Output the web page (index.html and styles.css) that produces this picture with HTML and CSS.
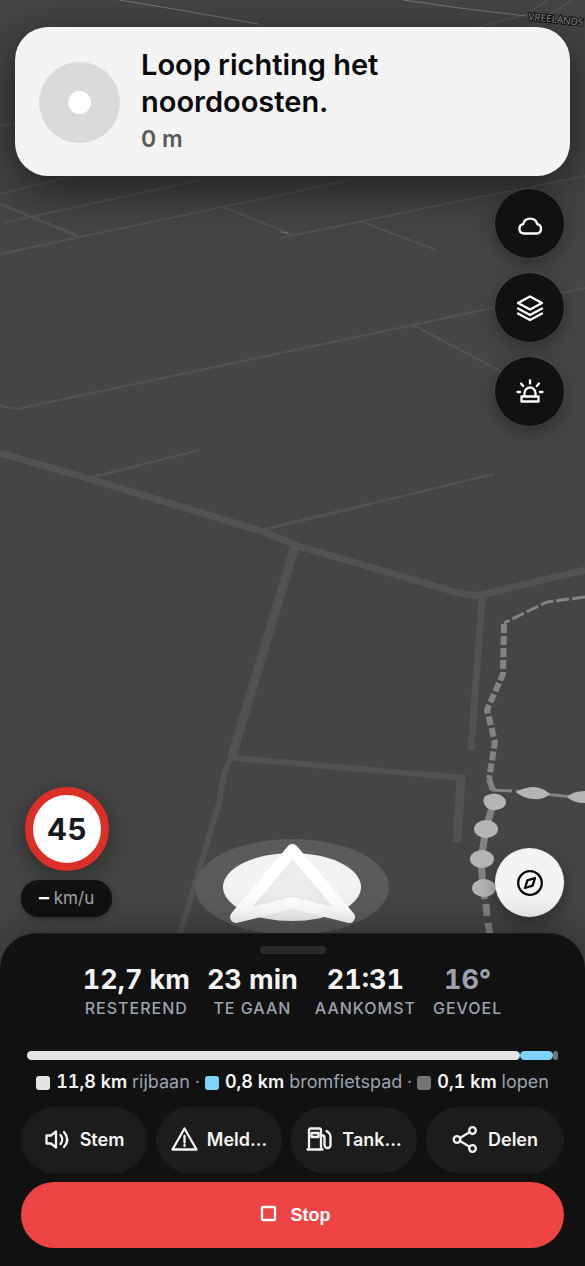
FILE: index.html
```html
<!DOCTYPE html>
<html lang="nl">
<head>
<meta charset="utf-8">
<meta name="viewport" content="width=device-width, initial-scale=1">
<title>Navigatie</title>
<link rel="stylesheet" href="styles.css">
</head>
<body>
<div class="app">
  <svg class="map" viewBox="0 0 585 1266" preserveAspectRatio="xMidYMin slice" aria-hidden="true">
    <g class="thin">
      <path d="M0 194L57 180L150 158M3 223L200 180M0 254L80 237L223 207L350 180M223 207L293 235M280 238L480 197L585 176M360 221L436 250"/>
      <path d="M0 126L15 124M478 27L525 15L548 0M550 14L572 0"/>
    </g>
    <path class="road w3" d="M0 204L80 237"/>
    <path class="road w2" d="M0 406L17 409L413 325L585 288M413 325L510 376M89 478L199 450M262 530L494 474"/>
    <path class="road w3" d="M89 478L140 465M262 530L370 504"/>
    <path class="road w7" d="M0 453L90 479L261 531L298 546L455 592Q468 596 481 595L585 570"/>
    <path class="road w9" d="M295 546L232 756"/>
    <path class="road w6" d="M233 750L229 762Q221 780 220 800L180 934"/>
    <path class="road w7" d="M482 598L471 750"/>
    <path class="road w6" d="M233 758L465 778"/>
    <path class="road w9" d="M461 778L457 842"/>
    <path class="hair" d="M119 0L180 10L258 24M403 0L460 8L526 16M281 232L288 233"/>
    <path class="foot f3" d="M585 597L547 602L504 623"/>
    <path class="foot f6" d="M504 624L503 674L487 710L495 742L489 779"/>
    <path class="foot-solid f6" d="M489 779L493 790"/>
    <path class="foot-solid f3" d="M492 790L512 791M516 791L563 796L585 797"/>
    <path class="foot-solid f7" d="M494 800L486 829L481 859L483 888L485 899"/>
    <path class="foot-solid f7" d="M486 904L487 916M488 923L490 935"/>
    <g class="dots">
      <path d="M516 792Q525 787 534 787Q544 788 550 794Q544 800 534 799Q524 799 516 792Z"/>
      <path d="M567 797Q573 791 585 791V803Q573 803 567 797Z"/>
      <path d="M485 796Q495 791 502 796Q509 801 504 807Q496 813 487 808Q481 802 485 796Z"/>
      <ellipse cx="486" cy="829" rx="12" ry="9"/>
      <ellipse cx="482" cy="859" rx="12" ry="9"/>
      <ellipse cx="484" cy="888" rx="12" ry="9"/>
    </g>
    <text class="street" x="528" y="20" transform="rotate(6 528 20)">VREELANDS</text>
    <ellipse class="halo" cx="292" cy="887" rx="97" ry="48"/>
    <ellipse class="disc" cx="292" cy="887" rx="69" ry="34"/>
    <path class="arrow" d="M292.500 850L236 917L292.500 903L349 917Z"/>
  </svg>

  <header class="instruction">
    <span class="maneuver"><span class="maneuver-dot"></span></span>
    <div class="instruction-text">
      <h1>Loop richting het noordoosten.</h1>
      <p>0 m</p>
    </div>
  </header>

  <nav class="tools" aria-label="Kaart">
    <button class="round" aria-label="Weer"><svg class="ico" viewBox="0 0 27 27"><path d="M8 23.500a4.700 4.700 0 0 1-.8-9.300a7.200 7.200 0 0 1 14 0a4.700 4.700 0 0 1-.6 9.300Z"/></svg></button>
    <button class="round" aria-label="Lagen"><svg class="ico" viewBox="0 0 27 27"><path d="M14 2.500L26 9L14 15.500L2 9Z"/><path d="M2 14.500L14 21L26 14.500M2 19.500L14 26L26 19.500"/></svg></button>
    <button class="round" aria-label="Alarm"><svg class="ico" viewBox="0 0 27 27"><path d="M8.500 18.500v-3.500a5.500 5.500 0 0 1 11 0v3.500M5.500 18.500h17v5h-17ZM14 2.500v3M5 5.500l2.200 2.500M23 5.500l-2.200 2.500M1.500 14h2.500M24 14h2.500"/></svg></button>
  </nav>

  <div class="hud">
    <div class="speed">
      <div class="limit">45</div>
      <div class="current"><b>–</b> km/u</div>
    </div>
    <button class="round light" aria-label="Kompas"><svg class="ico" viewBox="0 0 27 27"><circle cx="14" cy="14" r="11.800"/><path d="M19 9L16.600 16.600L9 19L11.400 11.400Z"/></svg></button>
  </div>

  <section class="panel">
    <span class="handle"></span>
    <dl class="stats">
      <div><dd>12,7 km</dd><dt>RESTEREND</dt></div>
      <div><dd>23 min</dd><dt>TE GAAN</dt></div>
      <div><dd>21:31</dd><dt>AANKOMST</dt></div>
      <div class="muted"><dd>16°</dd><dt>GEVOEL</dt></div>
    </dl>
    <div class="bar">
      <span class="seg main-road"></span><span class="seg moped" style="width:6.200%"></span><span class="seg walk" style="width:1%"></span>
    </div>
    <p class="legend">
      <span><i class="key main-road"></i><b>11,8 km</b> rijbaan ·</span>
      <span><i class="key moped"></i><b>0,8 km</b> bromfietspad ·</span>
      <span><i class="key walk"></i><b>0,1 km</b> lopen</span>
    </p>
    <div class="actions">
      <button class="action"><svg class="ico" viewBox="0 0 27 27"><path d="M2.500 9.500h4.500l5-4v16l-5-4H2.500ZM16.500 9q3.500 4.500 0 9M20 6q6.500 7.500 0 15"/></svg><span>Stem</span></button>
      <button class="action"><svg class="ico" viewBox="0 0 27 27"><path d="M13.500 2.500L25.500 23.500H1.500Z"/><path d="M13.500 10v6.500M13.500 19v1"/></svg><span>Meld…</span></button>
      <button class="action"><svg class="ico" viewBox="0 0 27 27"><path d="M3 23.500V4a1.500 1.500 0 0 1 1.500-1.500h9a1.500 1.500 0 0 1 1.500 1.500v19.500M1.500 23.500h15M5.500 7h7v4h-7Z"/><path d="M15 9.500h1.500q2 0 2 2V19a3 3 0 0 0 6 0V10.500q0-2-1.500-3.500L20.500 5"/></svg><span>Tank…</span></button>
      <button class="action wide"><svg class="ico" viewBox="0 0 27 27"><circle cx="20.500" cy="4.500" r="3.300"/><circle cx="5" cy="13.500" r="3.300"/><circle cx="20.500" cy="22.500" r="3.300"/><path d="M8 12L17.500 6.200M8 15L17.500 20.800"/></svg><span>Delen</span></button>
    </div>
    <button class="stop"><svg class="ico" viewBox="0 0 27 27"><rect x="7" y="5" width="13" height="13" rx="1"/></svg><span>Stop</span></button>
  </section>
</div>
</body>
</html>
```
FILE: styles.css
```css
* { box-sizing: border-box; }

body {
  margin: 0;
  background: #454545;
  font-family: Inter, "Liberation Sans", sans-serif;
}

h1, p, dl, dd, dt { margin: 0; }

button {
  border: 0;
  font: inherit;
  cursor: pointer;
}

.app {
  position: relative;
  display: flex;
  flex-direction: column;
  min-height: 100vh;
  overflow: hidden;
}

.app > * { position: relative; }

/* Map */
.app > .map {
  position: absolute;
  inset: 0;
  width: 100%;
  height: 100%;
  background: #454545;
}

.map path { fill: none; }
.thin, .road { stroke: #525254; stroke-linejoin: round; }
.thin { stroke-width: 2; }
.w2 { stroke-width: 2; }
.w3 { stroke-width: 3; }
.w6 { stroke-width: 6; }
.w7 { stroke-width: 7; }
.w9 { stroke-width: 9; }
.hair { stroke: #777; stroke-width: 1; }
.foot, .foot-solid { stroke: #838383; stroke-linejoin: round; }
.foot { stroke-dasharray: 9 3; }
.f3 { stroke-width: 3; }
.foot.f3 { stroke-dasharray: 13 3; }
.f6 { stroke-width: 6; }
.f7 { stroke-width: 7; }
.map .dots { fill: #b5b5b5; }
.map .dots path { fill: #b5b5b5; }
.street {
  fill: #8c8c8c;
  stroke: #111;
  stroke-width: 2px;
  paint-order: stroke;
  font-family: "Noto Sans", sans-serif;
  font-size: 10px;
}
.halo { fill: #5b5b5b; }
.disc { fill: #f3f3f3; }
.map .arrow { fill: #ececec; stroke: #fff; stroke-width: 12; stroke-linejoin: round; }

/* Instruction card */
.instruction {
  display: flex;
  align-items: center;
  gap: 21px;
  margin: 27px 15px 0;
  padding: 19px 24px 18px;
  border-radius: 33px;
  background: #f4f4f4;
  box-shadow: 0 12px 48px rgba(0, 0, 0, 0.6);
}

.maneuver {
  display: grid;
  place-items: center;
  flex: none;
  width: 81px;
  height: 81px;
  border-radius: 50%;
  background: #dadada;
}

.maneuver-dot {
  width: 23px;
  height: 23px;
  border-radius: 50%;
  background: #fff;
}

.instruction h1 {
  font-size: 29px;
  line-height: 37px;
  font-weight: 600;
  color: #0a0a0a;
}

.instruction p {
  font-size: 23px;
  line-height: 38px;
  font-weight: 600;
  color: #5a5a5a;
}

/* Map controls */
.tools {
  display: flex;
  flex-direction: column;
  align-items: flex-end;
  gap: 15px;
  margin: 13px 21px 0;
}

.round {
  display: grid;
  place-items: center;
  width: 69px;
  height: 69px;
  padding: 0;
  border-radius: 50%;
  background: #111;
  color: #fff;
  box-shadow: 0 0 0 1px rgba(255, 255, 255, 0.06), 0 6px 18px rgba(0, 0, 0, 0.35);
}

.round.light { background: #f4f4f4; color: #0a0a0a; }

.ico {
  flex: none;
  width: 27px;
  height: 27px;
  overflow: visible;
  fill: none;
  stroke: currentColor;
  stroke-width: 2.3;
  stroke-linecap: round;
  stroke-linejoin: round;
}

.hud {
  display: flex;
  justify-content: space-between;
  align-items: flex-end;
  margin: auto 21px 16px;
}

.speed {
  display: flex;
  flex-direction: column;
  align-items: center;
  gap: 9px;
}

.limit {
  display: grid;
  place-items: center;
  width: 84px;
  height: 84px;
  border: 8px solid #dc3026;
  border-radius: 50%;
  background: #fff;
  color: #17191c;
  font-size: 30px;
  font-weight: 700;
  box-shadow: 0 6px 24px rgba(0, 0, 0, 0.4);
}

.current {
  padding: 0 18px;
  border-radius: 18px;
  background: #111;
  color: #a3a3a3;
  font-size: 17px;
  line-height: 37px;
  box-shadow: 0 2px 6px rgba(0, 0, 0, 0.3);
}

.current b { color: #fff; font-size: 20px; line-height: 20px; }

/* Trip panel */
.panel {
  display: flex;
  flex-direction: column;
  padding: 12px 21px 18px;
  border-top: 1px solid #1c1c1c;
  border-radius: 36px 36px 0 0;
  background: #111;
  color: #f4f4f4;
  box-shadow: 0 -6px 36px rgba(0, 0, 0, 0.3);
  font-variant-numeric: tabular-nums;
}

.handle {
  align-self: center;
  width: 66px;
  height: 8px;
  border-radius: 4px;
  background: #2b2b2b;
}

.stats {
  display: flex;
  justify-content: center;
  gap: 17px;
  margin-top: 7px;
  text-align: center;
}

.stats dd {
  font-size: 27px;
  line-height: 38px;
  font-weight: 700;
}

.stats dt {
  color: #9ca3af;
  font-size: 16px;
  line-height: 19px;
  font-weight: 500;
  letter-spacing: 1px;
}

.stats .muted dd { color: #9ca3af; }

.bar {
  display: flex;
  height: 9px;
  margin: 33px 6px 0;
}

.seg { border-radius: 5px; }
.seg.main-road { flex: 1; }
.main-road { background: #e5e5e5; }
.moped { background: #7dd3fc; }
.walk { background: #737373; }

.legend {
  display: flex;
  justify-content: center;
  gap: 5px;
  margin-top: 8px;
  color: #9ca3af;
  font-size: 18px;
  line-height: 27px;
  white-space: nowrap;
}

.legend b { color: #f4f4f4; font-weight: 600; }

.key {
  display: inline-block;
  width: 14px;
  height: 14px;
  margin-right: 6px;
  border-radius: 3px;
  vertical-align: -2px;
}

.actions {
  display: flex;
  gap: 9px;
  margin-top: 12px;
}

.action, .stop {
  display: flex;
  align-items: center;
  justify-content: center;
  gap: 9px;
  height: 66px;
  padding: 0;
  border-radius: 33px;
}

.action {
  flex: 1;
  padding-bottom: 2px;
  background: #1c1c1c;
  color: #f4f4f4;
  font-size: 18px;
  font-weight: 600;
}

.action.wide { flex: none; padding: 0 26px 2px; }

.stop {
  margin-top: 9px;
  background: #ef4444;
  color: #fff;
  font-family: "Liberation Sans", Arial, sans-serif;
  font-size: 18px;
  font-weight: 700;
}
```
